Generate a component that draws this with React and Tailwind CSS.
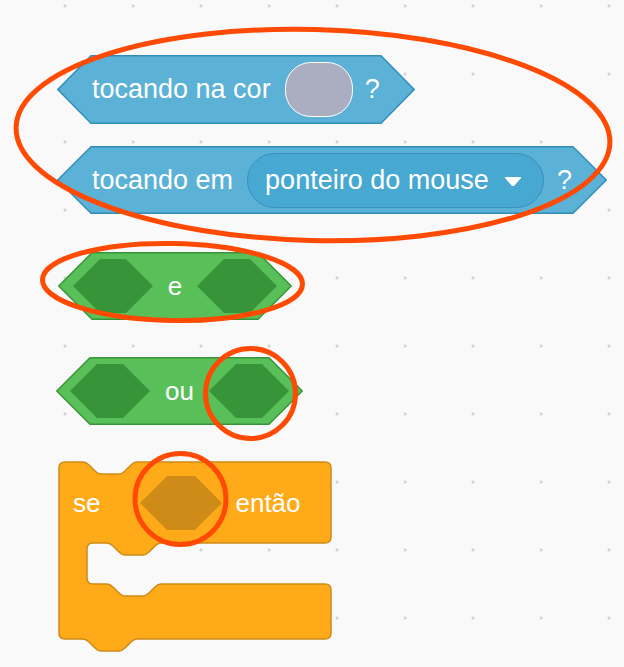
import React from 'react';

// block shape drawn behind the content of a reporter/boolean block
const HexShape = ({ w, h, s, fill, stroke }) => (
  <svg className="absolute inset-0" width={w} height={h} viewBox={`0 0 ${w} ${h}`} overflow="visible">
    <polygon
      points={`0.75,${h / 2} ${s},0.75 ${w - s},0.75 ${w - 0.75},${h / 2} ${w - s},${h - 0.75} ${s},${h - 0.75}`}
      fill={fill}
      stroke={stroke}
      strokeWidth="1.5"
      strokeLinejoin="round"
    />
  </svg>
);

// empty boolean slot
const Slot = ({ w = 80, h = 54, s = 27, fill, className = '' }) => (
  <svg className={`shrink-0 ${className}`} width={w} height={h} viewBox={`0 0 ${w} ${h}`}>
    <polygon points={`0,${h / 2} ${s},0 ${w - s},0 ${w},${h / 2} ${w - s},${h} ${s},${h}`} fill={fill} />
  </svg>
);

const notch = 'c 3,0 4.5,1.5 6,3 l 6,6 c 1.5,1.5 3,3 6,3 h 18 c 3,0 4.5,-1.5 6,-3 l 6,-6 c 1.5,-1.5 3,-3 6,-3';
const notchBack = 'c -3,0 -4.5,1.5 -6,3 l -6,6 c -1.5,1.5 -3,3 -6,3 h -18 c -3,0 -4.5,-1.5 -6,-3 l -6,-6 c -1.5,-1.5 -3,-3 -6,-3';

const ifPath = [
  'M 0 6 Q 0 0 6 0 H 24', notch,
  'H 266 Q 272 0 272 6 V 75 Q 272 81 266 81 H 102', notchBack,
  'H 34 Q 28 81 28 87 V 116 Q 28 122 34 122 H 48', notch,
  'H 266 Q 272 122 272 128 V 171 Q 272 177 266 177 H 78', notchBack,
  'H 6 Q 0 177 0 171 Z',
].join(' ');

const App = () => {
  return (
    <div className="relative h-[667px] w-[624px] overflow-hidden bg-[#f9f9f9] bg-[radial-gradient(circle,#d4d4d4_1.3px,transparent_1.8px)] bg-[length:68px_68px] bg-[position:31px_40px] font-['Liberation_Sans',Arial,sans-serif] text-white">
      <div className="flex flex-col items-start">
        {/* tocando na cor */}
        <div className="relative ml-[57px] mt-[55px] h-[69px] w-[358px]">
          <HexShape w={358} h={69} s={34} fill="#5cb1d6" stroke="#2e8eb8" />
          <div className="relative flex h-full items-center pl-[35px] text-[27px] leading-none">
            <span>tocando na cor</span>
            <span className="ml-[14px] h-[55px] w-[68px] rounded-[26px] border-[1.5px] border-white bg-[#abadc1]" />
            <span className="ml-[12px]">?</span>
          </div>
        </div>

        {/* tocando em */}
        <div className="relative ml-[57px] mt-[22px] h-[68px] w-[550px]">
          <HexShape w={550} h={68} s={34} fill="#5cb1d6" stroke="#2e8eb8" />
          <div className="relative flex h-full items-center pl-[35px] text-[27px] leading-none">
            <span>tocando em</span>
            <span className="ml-[14px] flex h-[55px] w-[297px] items-center rounded-full border-[1.5px] border-[#3a8fbe] bg-[#47a8d1] pl-[17px]">
              <span>ponteiro do mouse</span>
              <svg className="ml-[15px] mt-[3px]" width="18" height="11" viewBox="0 0 18 11">
                <path d="M2 1 H16 Q18 1 16.6 2.6 L10.4 9.4 Q9 10.8 7.6 9.4 L1.4 2.6 Q0 1 2 1 Z" fill="#fff" />
              </svg>
            </span>
            <span className="ml-[13px]">?</span>
          </div>
        </div>

        {/* e */}
        <div className="relative ml-[58px] mt-[38px] h-[68px] w-[234px]">
          <HexShape w={234} h={68} s={34} fill="#59c059" stroke="#389438" />
          <div className="relative flex h-full items-center justify-between px-[15px] text-[26px] leading-none">
            <Slot fill="#389438" />
            <span>e</span>
            <Slot fill="#389438" />
          </div>
        </div>

        {/* ou */}
        <div className="relative ml-[56px] mt-[37px] h-[68px] w-[247px]">
          <HexShape w={247} h={68} s={34} fill="#59c059" stroke="#389438" />
          <div className="relative flex h-full items-center justify-between px-[14px] text-[26px] leading-none">
            <Slot fill="#389438" />
            <span>ou</span>
            <Slot fill="#389438" />
          </div>
        </div>

        {/* se ... então */}
        <div className="relative ml-[59px] mt-[37px] h-[191px] w-[272px]">
          <svg className="absolute inset-0" width="272" height="191" viewBox="0 0 272 191" overflow="visible">
            <path d={ifPath} fill="#ffab19" stroke="#cf8b17" strokeWidth="1.5" strokeLinejoin="round" />
          </svg>
          <div className="relative flex h-[81px] items-center pl-[14px] text-[26px] leading-none">
            <span>se</span>
            <Slot w={82} fill="#cf8b17" className="ml-[40px]" />
            <span className="ml-[13px]">então</span>
          </div>
        </div>
      </div>

      {/* red marks drawn over the blocks */}
      <svg className="pointer-events-none absolute inset-0" width="624" height="667" viewBox="0 0 624 667">
        <g fill="none" stroke="#fe4a03" strokeWidth="5">
          <ellipse cx="313" cy="135" rx="297" ry="105.5" transform="rotate(1.5 313 135)" />
          <ellipse cx="172.5" cy="282" rx="130" ry="38.5" transform="rotate(1 172.5 282)" />
          <circle cx="250.5" cy="393.5" r="45" />
          <circle cx="180.5" cy="499" r="45.5" />
        </g>
      </svg>
    </div>
  );
};

export default App;
